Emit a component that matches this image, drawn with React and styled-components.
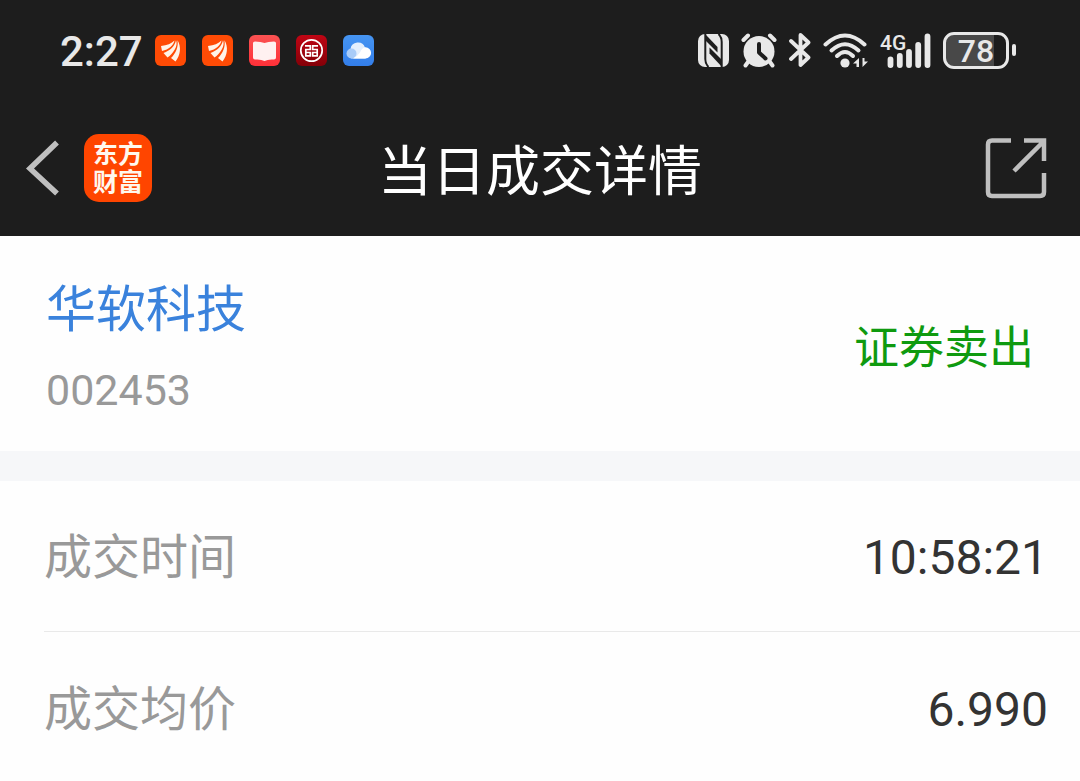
import React from "react";
import styled, { createGlobalStyle } from "styled-components";

const GlobalStyle = createGlobalStyle`
  * { box-sizing: border-box; }
  body {
    margin: 0;
    background: #fefefe;
    font-family: Roboto, "Noto Sans CJK SC", sans-serif;
  }
`;

const StatusBar = styled.div`
  display: flex;
  align-items: center;
  justify-content: space-between;
  height: 100px;
  padding: 0 64px 0 60px;
  color: #e8e8e8;
  background: #1d1d1d;
`;

const StatusGroup = styled.div`
  display: flex;
  align-items: center;
  gap: ${(p) => p.$gap}px;

  svg { display: block; }
`;

const Clock = styled.time`
  padding-top: 4px;
  font-size: 42px;
  line-height: 52px;
  font-weight: 500;
  white-space: nowrap;
`;

const Header = styled.header`
  display: grid;
  grid-template-columns: 1fr auto 1fr;
  align-items: center;
  height: 136px;
  padding: 0 32px;
  background: #1d1d1d;
`;

const HeaderLeft = styled.div`
  display: flex;
  align-items: center;
  gap: 24px;
  margin-left: -8px;
`;

const IconButton = styled.button`
  display: block;
  justify-self: ${(p) => p.$align || "start"};
  padding: 0;
  border: 0;
  background: none;
  color: #bfbfbf;

  svg { display: block; }
`;

const BrandLogo = styled.a`
  width: 68px;
  height: 68px;
  padding: 4px 9px;
  border-radius: 15px;
  background: #ff4500;
  color: #fff8ee;
  font-family: "Noto Sans CJK SC", sans-serif;
  font-size: 25px;
  line-height: 28px;
  font-weight: 700;
  text-decoration: none;
`;

const Title = styled.h1`
  margin: 0;
  padding-top: 10px;
  color: #fff;
  font-size: 54px;
  line-height: 64px;
  font-weight: 400;
`;

const StockPanel = styled.section`
  display: flex;
  align-items: center;
  justify-content: space-between;
  padding: 38px 46px 28px 46px;
  border-bottom: 30px solid #f6f7f9;
`;

const StockName = styled.a`
  display: block;
  color: #3a82dc;
  font-size: 50px;
  line-height: 72px;
  text-decoration: none;
`;

const StockCode = styled.div`
  margin-top: 11px;
  color: #999;
  font-size: 43px;
  line-height: 66px;
`;

const Side = styled.strong`
  color: #0f9a0f;
  font-size: 45px;
  line-height: 64px;
  font-weight: 400;
`;

const Details = styled.dl`
  margin: 0;
`;

const DetailRow = styled.div`
  display: flex;
  align-items: center;
  justify-content: space-between;
  height: 151px;
  margin-left: 44px;
  padding: 4px 32px 0 0;
  border-bottom: ${(p) => (p.$last ? "0" : "1px solid #e9e9e9")};
`;

const Label = styled.dt`
  color: #999;
  font-size: 48px;
  line-height: 64px;
`;

const Value = styled.dd`
  margin: 0;
  color: #333;
  font-size: 48px;
  line-height: 64px;
`;

const TradeIcon = () => (
  <svg width="31" height="31" viewBox="0 0 31 31" aria-hidden="true">
    <rect width="31" height="31" rx="6" fill="#ff4b05" />
    <g fill="#fff4e8">
      <path d="M6 11C12 10.500 16.500 8.500 19.500 5.500C18.500 10.500 14 14.500 7 16Z" />
      <path d="M8.500 18C15 15.500 20 11 21 5.200C23.500 11 18 18.500 12.500 22.500Z" />
      <path d="M22.500 5.200C26.500 12 25.500 20 20.500 26.500L16 23C21 18 23.500 12 22.500 5.200Z" />
    </g>
  </svg>
);

const BookIcon = () => (
  <svg width="31" height="31" viewBox="0 0 31 31" aria-hidden="true">
    <defs>
      <linearGradient id="book" x2="0" y2="1">
        <stop stopColor="#fa5252" />
        <stop offset="1" stopColor="#ff3038" />
      </linearGradient>
    </defs>
    <rect width="31" height="31" rx="6" fill="url(#book)" />
    <path d="M4 8Q4 6.500 6 6.500Q12 6.500 15.500 8Q19 6.500 25 6.500Q27 6.500 27 8V22.500Q27 24.500 25 24.500Q19 24 15.500 26Q12 24 6 24.500Q4 24.500 4 22.500Z" fill="#fff1f0" />
  </svg>
);

const BankIcon = () => (
  <svg width="31" height="31" viewBox="0 0 31 31" aria-hidden="true">
    <defs>
      <linearGradient id="bank" x2="0" y2="1">
        <stop stopColor="#c00514" />
        <stop offset="1" stopColor="#850008" />
      </linearGradient>
    </defs>
    <rect width="31" height="31" rx="6" fill="url(#bank)" />
    <g fill="none" stroke="#fff" strokeWidth="1.700">
      <circle cx="15.500" cy="15.500" r="10.700" />
      <path d="M9 10.800H14.300V14.500H9.800V20.800H14.300V17.500H9M22 10.800H16.700V14.500H21.200V20.800H16.700V17.500H22" />
    </g>
  </svg>
);

const CloudIcon = () => (
  <svg width="31" height="31" viewBox="0 0 31 31" aria-hidden="true">
    <defs>
      <linearGradient id="sky" x2="0" y2="1">
        <stop stopColor="#4695f2" />
        <stop offset="1" stopColor="#337eea" />
      </linearGradient>
    </defs>
    <rect width="31" height="31" rx="6" fill="url(#sky)" />
    <path d="M9 23.500A5 5 0 0 1 7.500 14A7.500 7.500 0 0 1 22 12.500A5.700 5.700 0 0 1 22 23.500Z" fill="#e4effd" />
    <circle cx="8.500" cy="18.500" r="5" fill="#a9ccf8" />
    <path d="M10 23.500Q14 22 17 17.500Q19 12.500 22.500 12.300A5.600 5.600 0 0 1 22.500 23.500Z" fill="#fff" />
  </svg>
);

const NfcIcon = () => (
  <svg width="31" height="33" viewBox="0 0 31 33" aria-hidden="true">
    <rect width="31" height="33" rx="7" fill="#e8e8e8" />
    <path d="M7.300 0V25Q7.300 30 10.500 33" fill="none" stroke="#1d1d1d" strokeWidth="2" />
    <path d="M20.500 0Q23.700 3 23.700 8V33" fill="none" stroke="#1d1d1d" strokeWidth="2" />
    <path d="M7 0L9 2L19.500 13V18.500L7 6Z" fill="#1d1d1d" />
    <path d="M11.500 13.500L24 26V33L11.500 19.500Z" fill="#1d1d1d" />
  </svg>
);

const AlarmIcon = () => (
  <svg width="36" height="35" viewBox="0 0 36 35" aria-hidden="true">
    <circle cx="18" cy="18.500" r="15.500" fill="#e8e8e8" />
    <path d="M2.500 7L7 2.500M33.500 7L29 2.500M7 29L4.500 32.500M29 29L31.500 32.500" stroke="#e8e8e8" strokeWidth="4" strokeLinecap="round" />
    <path d="M18 11V19.500L24.500 25.500" fill="none" stroke="#1d1d1d" strokeWidth="4" strokeLinecap="round" strokeLinejoin="round" />
  </svg>
);

const BluetoothIcon = () => (
  <svg width="22" height="36" viewBox="0 0 22 36" aria-hidden="true">
    <path d="M2 9L19.500 25.500L11.500 33V3L19.500 10.500L2 27" fill="none" stroke="#e8e8e8" strokeWidth="3.800" strokeLinecap="round" strokeLinejoin="round" />
  </svg>
);

const WifiIcon = () => (
  <svg width="46" height="35" viewBox="0 0 46 35" aria-hidden="true">
    <g fill="none" stroke="#e8e8e8" strokeWidth="4" strokeLinecap="round">
      <path d="M2.500 11.500Q22 -6.500 41.500 11.500" />
      <path d="M8.500 17.500Q22 5 35.500 17.500" />
      <path d="M14 23Q22 15 30 23" />
    </g>
    <circle cx="22" cy="30" r="4.600" fill="#e8e8e8" />
    <path d="M30 30.500L36 25V34H33.500V30.500ZM45 28.500L39.500 34V25H41.500V28.500Z" fill="#e8e8e8" />
  </svg>
);

const SignalWrap = styled.div`
  position: relative;
`;

const NetworkTag = styled.span`
  position: absolute;
  top: -1px;
  left: -1px;
  font-size: 21px;
  line-height: 22px;
  font-weight: 500;
`;

const SignalIcon = () => (
  <svg width="50" height="35" viewBox="0 0 50 35" aria-hidden="true">
    <path d="M9.500 26.500V32M18.800 23V32M28 19V32M37.200 12V32M46.500 3.500V32" stroke="#e8e8e8" strokeWidth="5.800" strokeLinecap="round" />
  </svg>
);

const Battery = styled.div`
  display: flex;
  align-items: center;
  gap: 3px;

  &::after {
    content: "";
    width: 4px;
    height: 12px;
    border-radius: 2px;
    background: #e8e8e8;
  }
`;

const BatteryCell = styled.div`
  width: 66px;
  height: 37px;
  border: 3px solid #e8e8e8;
  border-radius: 11px;
  background: linear-gradient(to right, #484848 80%, #1d1d1d 80%);
  font-size: 32px;
  line-height: 32px;
  font-weight: 500;
  text-align: center;
`;

const BackIcon = () => (
  <svg width="36" height="58" viewBox="0 0 36 58" aria-hidden="true">
    <path d="M33 3.500L6 29.500L33 54.500" fill="none" stroke="currentColor" strokeWidth="5.500" />
  </svg>
);

const ShareIcon = () => (
  <svg width="63" height="62" viewBox="0 0 63 62" aria-hidden="true">
    <g fill="none" stroke="currentColor" strokeWidth="4.500">
      <path d="M26 3.500H7Q3 3.500 3 7.500V55Q3 59 7 59H55Q59 59 59 55V36" />
      <path d="M39 3.500H59V24M58 5L29 34" />
    </g>
  </svg>
);

const details = [
  { label: "成交时间", value: "10:58:21" },
  { label: "成交均价", value: "6.990" },
];

export default function App() {
  return (
    <>
      <GlobalStyle />
      <StatusBar>
        <StatusGroup $gap={12}>
          <Clock>2:27</Clock>
          <StatusGroup $gap={16}>
            <TradeIcon />
            <TradeIcon />
            <BookIcon />
            <BankIcon />
            <CloudIcon />
          </StatusGroup>
        </StatusGroup>
        <StatusGroup $gap={12}>
          <NfcIcon />
          <AlarmIcon />
          <BluetoothIcon />
          <WifiIcon />
          <SignalWrap>
            <SignalIcon />
            <NetworkTag>4G</NetworkTag>
          </SignalWrap>
          <Battery>
            <BatteryCell>78</BatteryCell>
          </Battery>
        </StatusGroup>
      </StatusBar>
      <Header>
        <HeaderLeft>
          <IconButton type="button" aria-label="返回">
            <BackIcon />
          </IconButton>
          <BrandLogo href="#home">东方财富</BrandLogo>
        </HeaderLeft>
        <Title>当日成交详情</Title>
        <IconButton type="button" aria-label="分享" $align="end">
          <ShareIcon />
        </IconButton>
      </Header>
      <main>
        <StockPanel>
          <div>
            <StockName href="#stock">华软科技</StockName>
            <StockCode>002453</StockCode>
          </div>
          <Side>证券卖出</Side>
        </StockPanel>
        <Details>
          {details.map((item, i) => (
            <DetailRow key={item.label} $last={i === details.length - 1}>
              <Label>{item.label}</Label>
              <Value>{item.value}</Value>
            </DetailRow>
          ))}
        </Details>
      </main>
    </>
  );
}
